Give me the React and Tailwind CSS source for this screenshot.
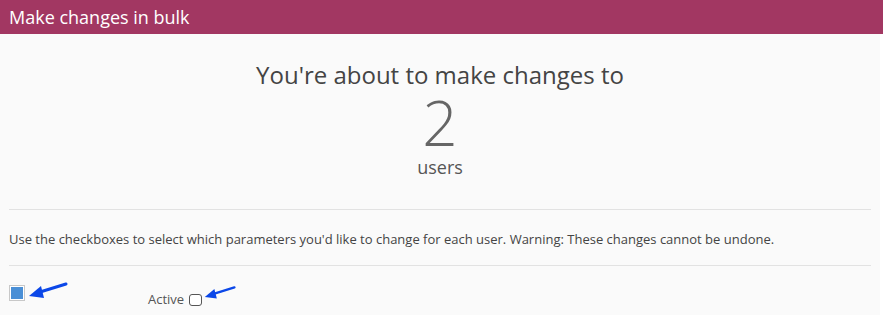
import React from "react";

function Arrow({ className }) {
  return (
    <svg className={className} width="40" height="20" viewBox="0 0 40 20">
      <line x1="38" y1="3" x2="12" y2="11" stroke="#0b47e8" strokeWidth="3" strokeLinecap="round" />
      <polygon points="1,15 13,5 16,17" fill="#0b47e8" />
    </svg>
  );
}

export default function App() {
  return (
    <div className="w-[883px] h-[315px] bg-white overflow-hidden" style={{ fontFamily: '"Open Sans", sans-serif' }}>
      <div className="h-[34px] bg-[#a23762] flex items-center pl-[9px] text-white text-[18px]">
        Make changes in bulk
      </div>
      <div className="w-[880px] bg-[#fafafa] h-[281px] px-[9px]">
        <div className="flex flex-col items-center text-center pt-[26px] pb-[30px]">
          <div className="text-[24px] leading-[30px] text-[#444]">You're about to make changes to</div>
          <div className="text-[62px] leading-[56px] font-light text-[#666] mt-[4px]">2</div>
          <div className="text-[18px] leading-[24px] text-[#555] mt-[5px]">users</div>
        </div>
        <div className="border-t border-[#e2e2e2]"></div>
        <div className="text-[13px] leading-[16px] text-[#444] pt-[21px] pb-[18px]">
          Use the checkboxes to select which parameters you'd like to change for each user. Warning: These changes cannot be undone.
        </div>
        <div className="border-t border-[#e2e2e2]"></div>
        <div className="flex items-start pt-[19px]">
          <div className="relative">
            <div className="w-[16px] h-[16px] border border-[#c8c8c8] bg-white p-[1px]">
              <div className="w-full h-full bg-[#4a8fd6]"></div>
            </div>
            <Arrow className="absolute left-[19px] top-[-4px]" />
          </div>
          <div className="flex items-center ml-[123px] mt-[5px] relative">
            <span className="text-[13px] text-[#555]">Active</span>
            <div className="w-[13px] h-[12px] border border-[#555] rounded-[3px] bg-white ml-[5px]"></div>
            <Arrow className="absolute left-[56px] top-[-7px] w-[32px]" />
          </div>
        </div>
      </div>
    </div>
  );
}
